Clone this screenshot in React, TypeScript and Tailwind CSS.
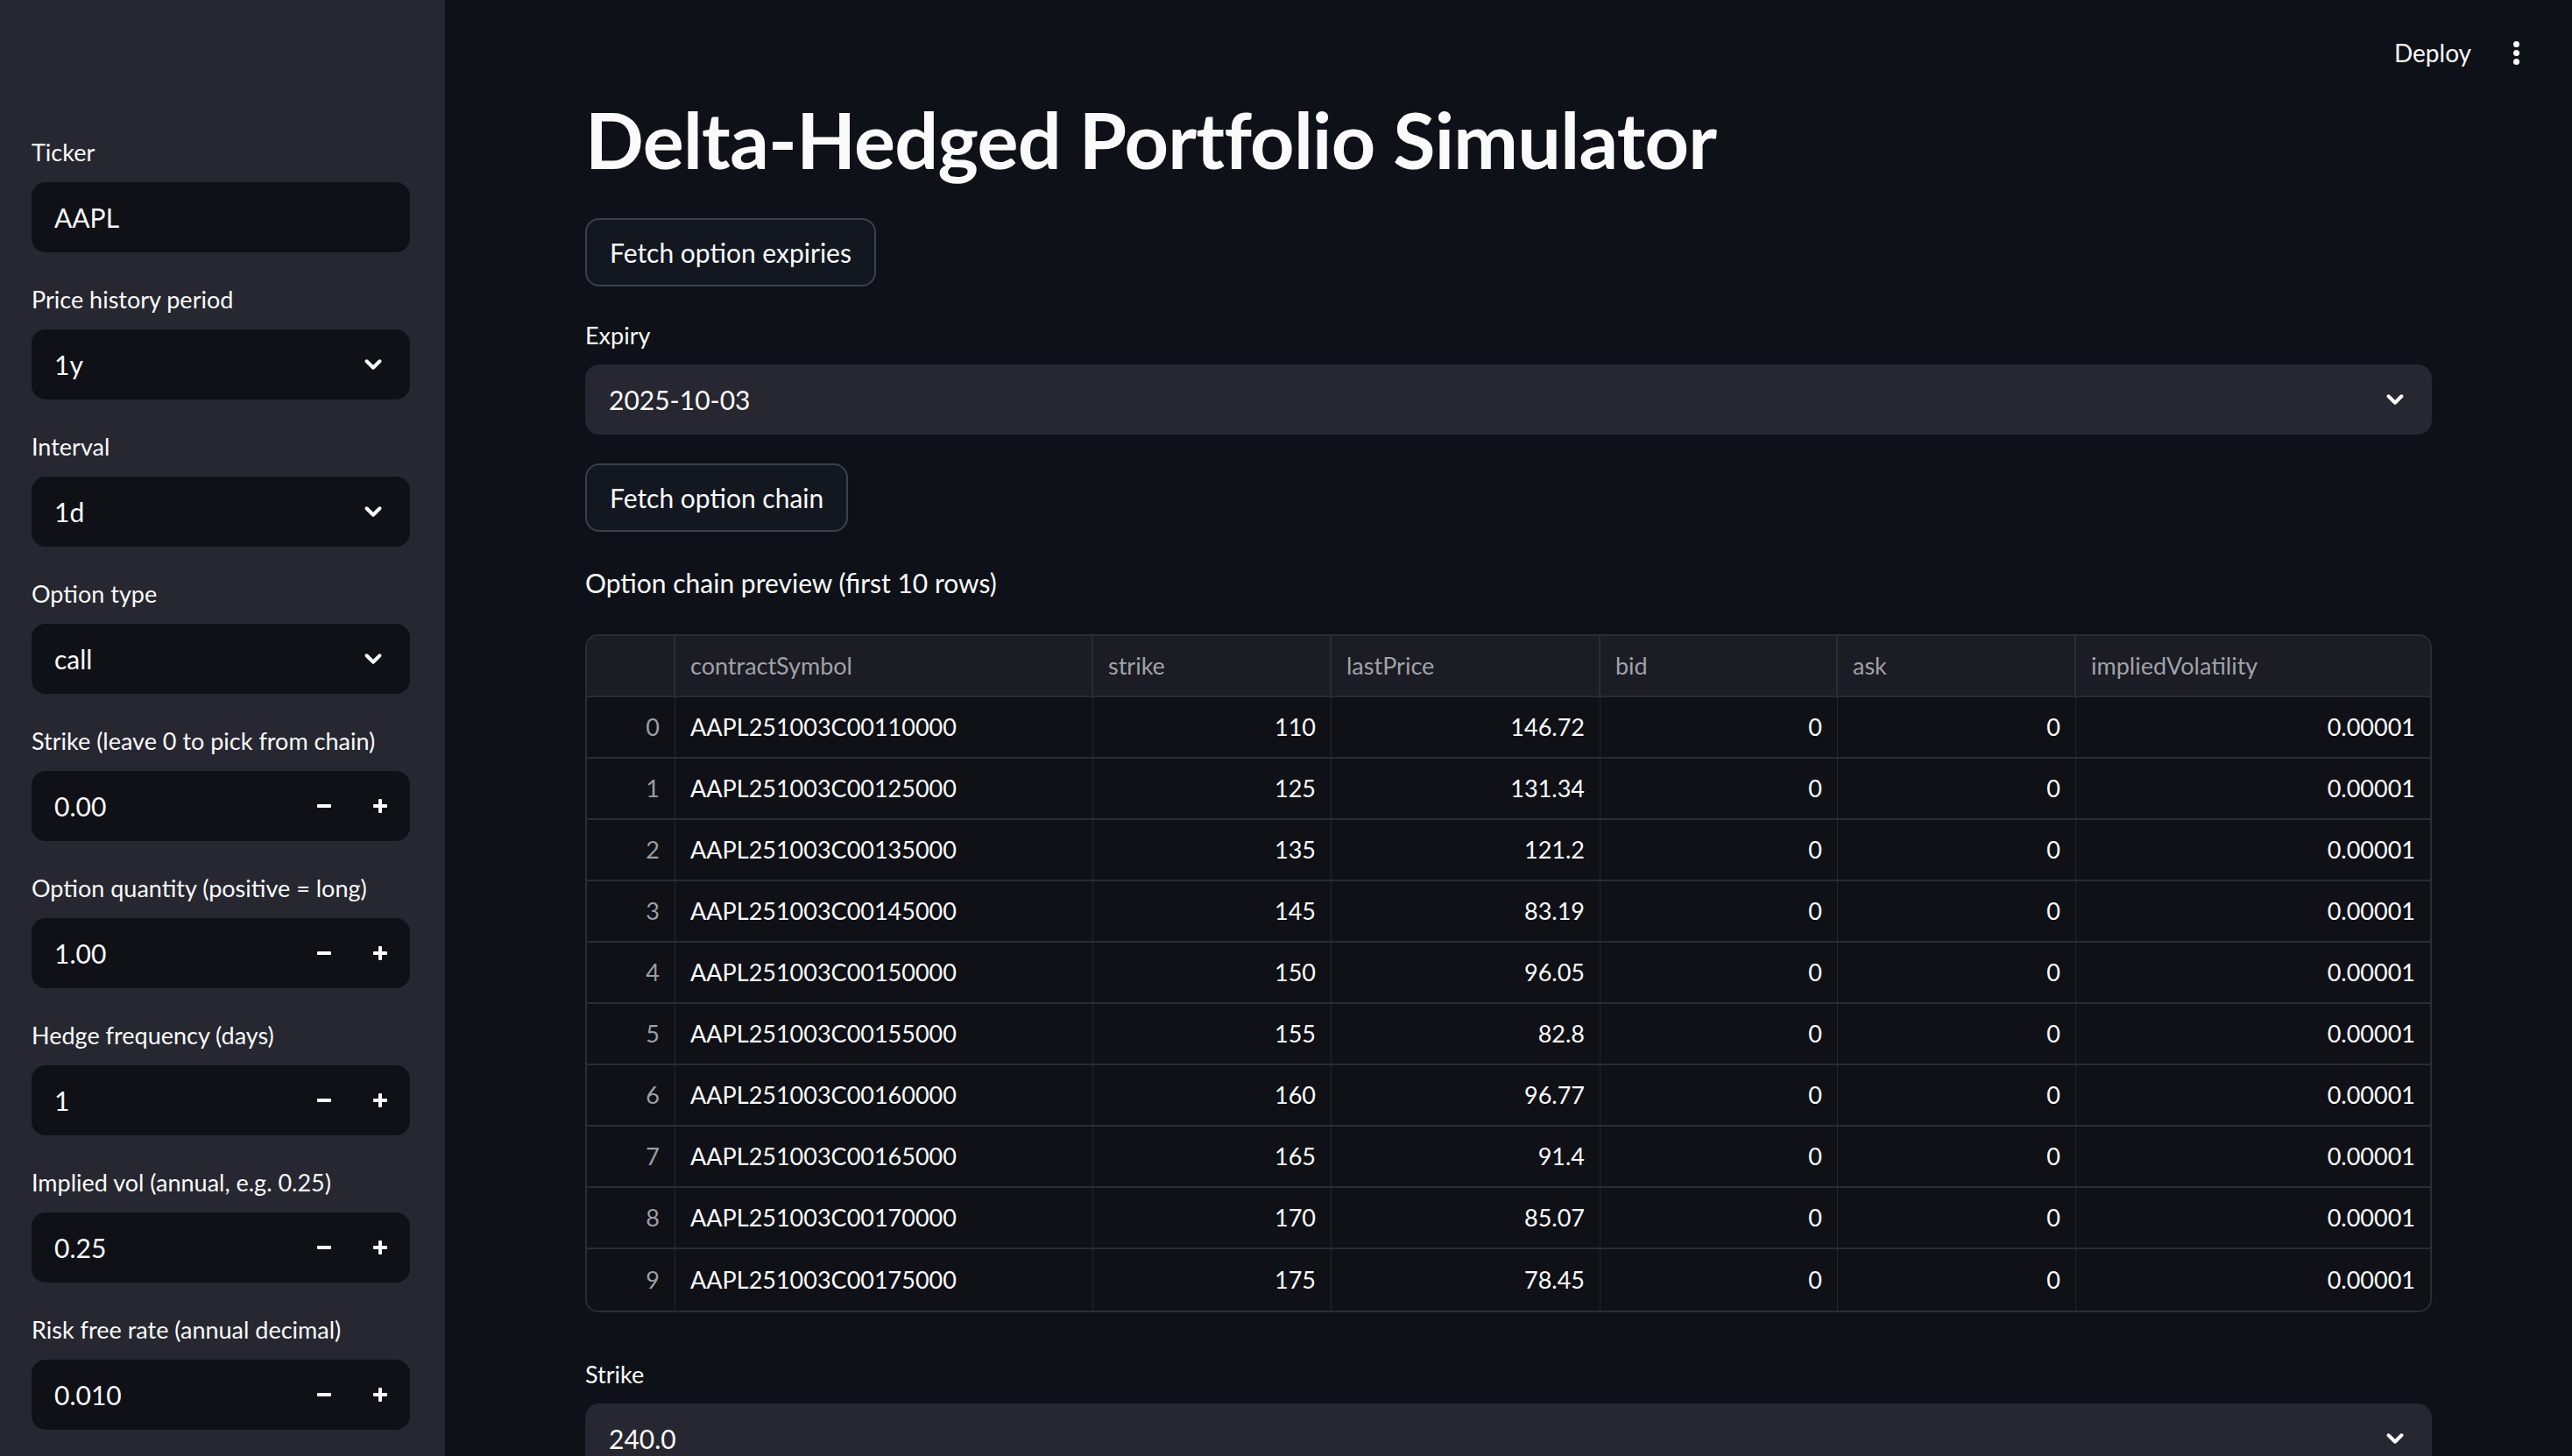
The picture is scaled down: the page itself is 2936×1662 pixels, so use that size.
import * as React from 'react';
import { ChevronDown } from 'lucide-react';

type Field =
  | { kind: 'text'; label: string; value: string }
  | { kind: 'select'; label: string; value: string }
  | { kind: 'number'; label: string; value: string };

const sidebarFields: Field[] = [
  { kind: 'text', label: 'Ticker', value: 'AAPL' },
  { kind: 'select', label: 'Price history period', value: '1y' },
  { kind: 'select', label: 'Interval', value: '1d' },
  { kind: 'select', label: 'Option type', value: 'call' },
  { kind: 'number', label: 'Strike (leave 0 to pick from chain)', value: '0.00' },
  { kind: 'number', label: 'Option quantity (positive = long)', value: '1.00' },
  { kind: 'number', label: 'Hedge frequency (days)', value: '1' },
  { kind: 'number', label: 'Implied vol (annual, e.g. 0.25)', value: '0.25' },
  { kind: 'number', label: 'Risk free rate (annual decimal)', value: '0.010' },
];

const chain = [
  { sym: 'AAPL251003C00110000', strike: '110', last: '146.72' },
  { sym: 'AAPL251003C00125000', strike: '125', last: '131.34' },
  { sym: 'AAPL251003C00135000', strike: '135', last: '121.2' },
  { sym: 'AAPL251003C00145000', strike: '145', last: '83.19' },
  { sym: 'AAPL251003C00150000', strike: '150', last: '96.05' },
  { sym: 'AAPL251003C00155000', strike: '155', last: '82.8' },
  { sym: 'AAPL251003C00160000', strike: '160', last: '96.77' },
  { sym: 'AAPL251003C00165000', strike: '165', last: '91.4' },
  { sym: 'AAPL251003C00170000', strike: '170', last: '85.07' },
  { sym: 'AAPL251003C00175000', strike: '175', last: '78.45' },
];

const headers = ['', 'contractSymbol', 'strike', 'lastPrice', 'bid', 'ask', 'impliedVolatility'];

const Chevron = () => <ChevronDown size={30} strokeWidth={3.2} className="text-[#fafafa] shrink-0" />;

const MinusIcon = () => (
  <svg width="16" height="16" viewBox="0 0 16 16" fill="#fafafa">
    <rect x="0" y="6" width="16" height="4" rx="1" />
  </svg>
);

const PlusIcon = () => (
  <svg width="16" height="16" viewBox="0 0 16 16" fill="#fafafa">
    <rect x="0" y="6" width="16" height="4" rx="1" />
    <rect x="6" y="0" width="4" height="16" rx="1" />
  </svg>
);

const SidebarField = ({ field }: { field: Field }) => (
  <div className="flex flex-col">
    <label className="h-[36px] leading-[36px] text-[27px] text-[#fafafa] mb-[16px] whitespace-nowrap">{field.label}</label>
    <div className="h-[80px] rounded-[16px] bg-[#0f1117] flex items-center pl-[26px] text-[30px] text-[#fafafa]">
      <span className="flex-1">{field.value}</span>
      {field.kind === 'select' && (
        <span className="pr-[27px] flex items-center">
          <Chevron />
        </span>
      )}
      {field.kind === 'number' && (
        <div className="flex h-full mr-[2px]">
          <button className="w-[64px] h-full flex items-center justify-center">
            <MinusIcon />
          </button>
          <button className="w-[64px] h-full flex items-center justify-center">
            <PlusIcon />
          </button>
        </div>
      )}
    </div>
  </div>
);

const Sidebar = () => (
  <aside className="w-[508px] shrink-0 h-full bg-[#262730] pl-[36px] pr-[40px] pt-[156px] flex flex-col gap-[36px] overflow-hidden">
    {sidebarFields.map((f) => (
      <SidebarField key={f.label} field={f} />
    ))}
  </aside>
);

const StButton = ({ children }: { children: React.ReactNode }) => (
  <button className="self-start h-[78px] px-[26px] rounded-[16px] border-2 border-[#3d4045] bg-[#131720] text-[30px] text-[#fafafa]">
    {children}
  </button>
);

const SelectBox = ({ label, value, className = '' }: { label: string; value: string; className?: string }) => (
  <div className={`flex flex-col ${className}`}>
    <label className="h-[36px] leading-[36px] text-[27px] text-[#fafafa] mb-[15px]">{label}</label>
    <div className="h-[80px] rounded-[16px] bg-[#262730] flex items-center pl-[27px] pr-[27px] text-[30px] text-[#fafafa]">
      <span className="flex-1">{value}</span>
      <Chevron />
    </div>
  </div>
);

const ChainTable = () => {
  const cols = 'grid grid-cols-[101px_477px_272px_307px_271px_272px_1fr]';
  return (
    <div className="mt-[37px] rounded-[15px] border-2 border-[#2b2d34] overflow-hidden text-[27px]">
      <div className={`${cols} h-[70px] bg-[#1b1c24] border-b-2 border-[#2b2d34]`}>
        {headers.map((h, i) => (
          <div
            key={i}
            className={`flex items-center px-[17px] text-[#a0a2a8] ${i < headers.length - 1 ? 'border-r-2 border-[#2b2d34]' : ''}`}
          >
            {h}
          </div>
        ))}
      </div>
      {chain.map((r, idx) => {
        const cells = [String(idx), r.sym, r.strike, r.last, '0', '0', '0.00001'];
        return (
          <div
            key={r.sym}
            className={`${cols} h-[70px] bg-[#0f1117] ${idx < chain.length - 1 ? 'border-b-2 border-[#2b2d34]' : ''}`}
          >
            {cells.map((c, i) => (
              <div
                key={i}
                className={`flex items-center px-[17px] ${
                  i === 1 ? 'justify-start' : 'justify-end'
                } ${i === 0 ? 'text-[#9c9ea4]' : 'text-[#fafafa]'} ${
                  i < cells.length - 1 ? 'border-r border-[#24262d]' : ''
                }`}
              >
                {c}
              </div>
            ))}
          </div>
        );
      })}
    </div>
  );
};

export default function App() {
  return (
    <div className="flex h-[1662px] w-full overflow-hidden bg-[#0e1117] font-['Source_Sans_Pro','Lato',sans-serif] text-[#fafafa]">
      <Sidebar />
      <main className="flex-1 flex flex-col overflow-hidden">
        <header className="h-[109px] shrink-0 flex items-start justify-end pt-[40px] pr-[60px] gap-[48px]">
          <span className="h-[40px] leading-[40px] text-[28px]">Deploy</span>
          <div className="h-[40px] flex flex-col items-center justify-center gap-[3px]">
            <span className="w-[7px] h-[7px] rounded-full bg-[#fafafa]" />
            <span className="w-[7px] h-[7px] rounded-full bg-[#fafafa]" />
            <span className="w-[7px] h-[7px] rounded-full bg-[#fafafa]" />
          </div>
        </header>
        <div className="flex flex-col px-[160px]">
          <h1 className="h-[100px] leading-[100px] text-[88px] font-bold tracking-[-0.7px]">Delta-Hedged Portfolio Simulator</h1>
          <div className="mt-[40px] flex">
            <StButton>Fetch option expiries</StButton>
          </div>
          <SelectBox label="Expiry" value="2025-10-03" className="mt-[38px]" />
          <div className="mt-[33px] flex">
            <StButton>Fetch option chain</StButton>
          </div>
          <p className="mt-[36px] h-[44px] leading-[44px] text-[30px]">Option chain preview (first 10 rows)</p>
          <ChainTable />
          <SelectBox label="Strike" value="240.0" className="mt-[53px]" />
        </div>
      </main>
    </div>
  );
}
